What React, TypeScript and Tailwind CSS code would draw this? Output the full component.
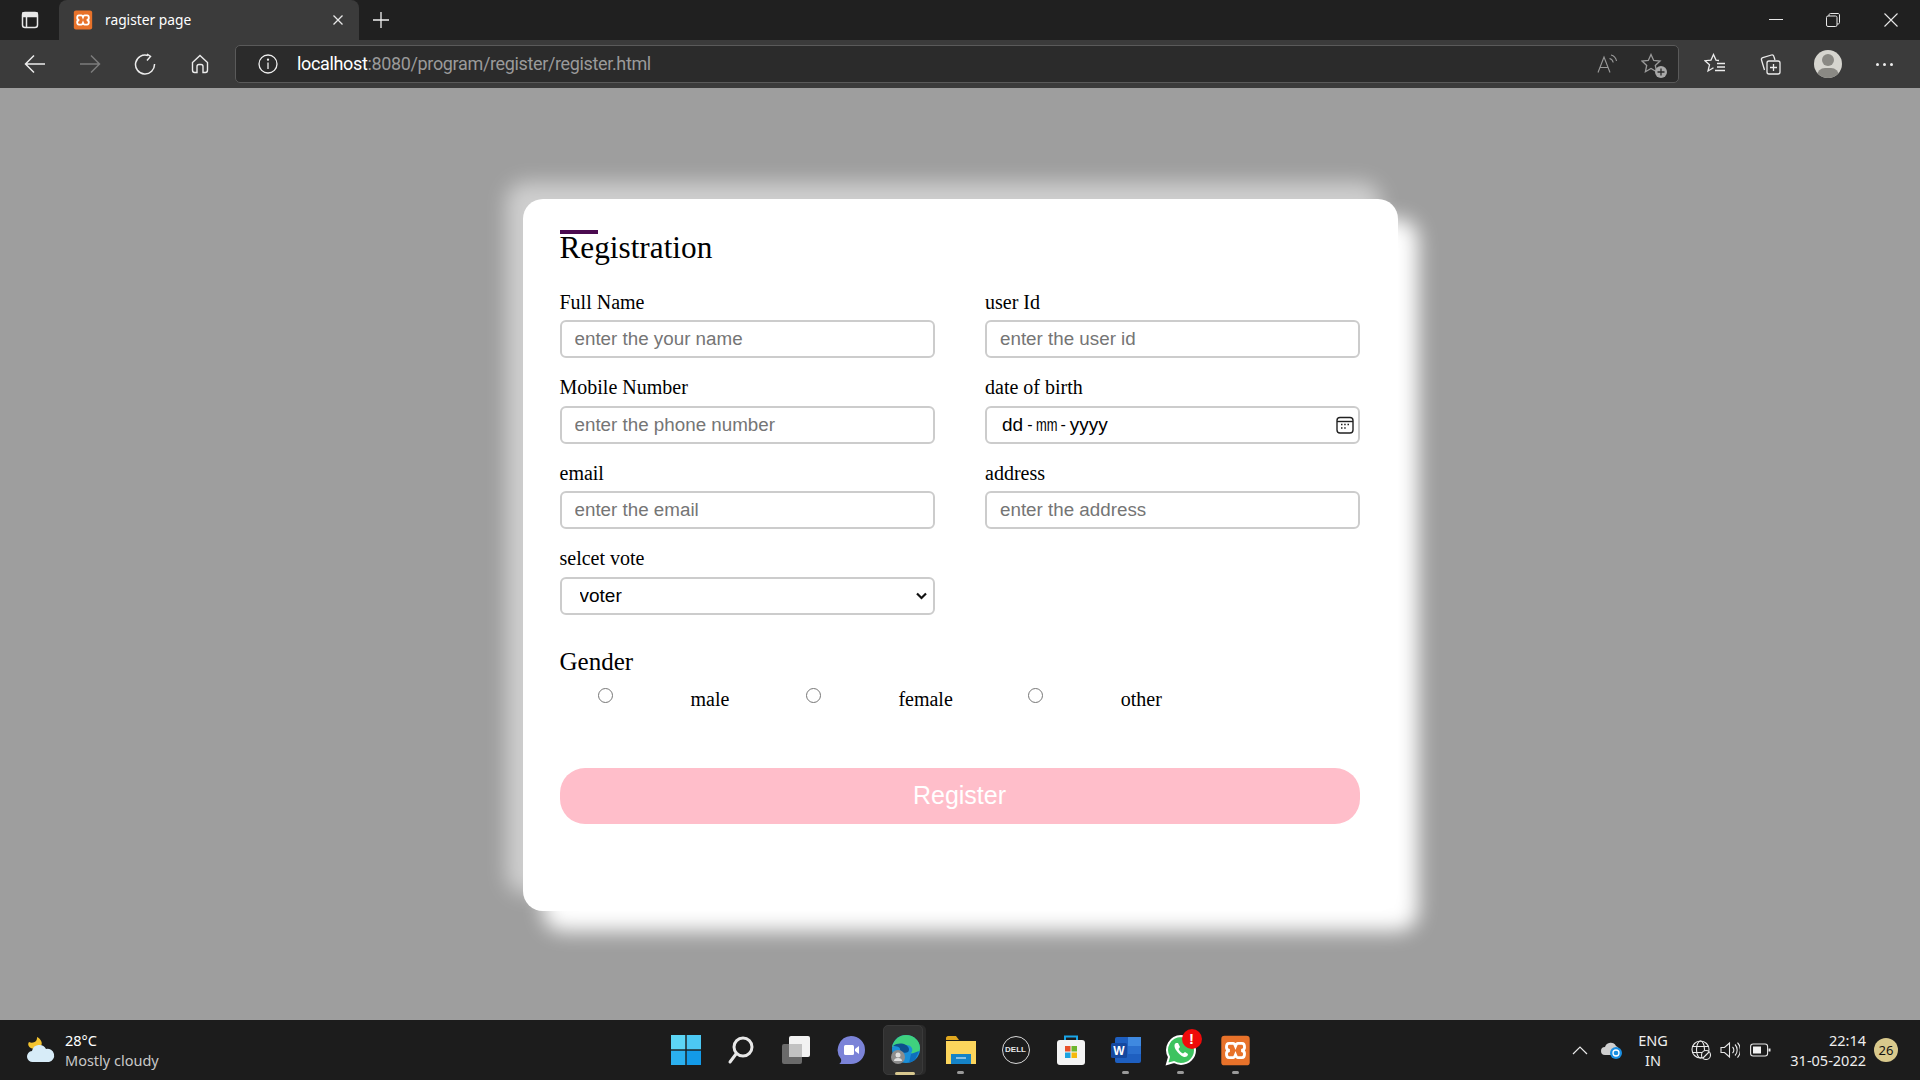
const sans = 'font-["Liberation_Sans",sans-serif]'

function Field({ label, children }: { label: string; children: React.ReactNode }) {
  return (
    <div className="mb-[18px]">
      <label className="block h-[23px] mb-[6.500px] text-[20px] leading-[23px] text-black">{label}</label>
      {children}
    </div>
  )
}

function TextInput({ placeholder }: { placeholder: string }) {
  return (
    <input
      placeholder={placeholder}
      className={`block w-[375px] h-[38px] px-[13px] border-2 border-[#cccccc] rounded-[6px] bg-white text-[18.800px] outline-none placeholder:text-[#757575] ${sans}`}
    />
  )
}

function XamppLogo({ size }: { size: number }) {
  return (
    <svg width={size} height={size} viewBox="0 0 24 24">
      <rect x="1" y="0.5" width="22" height="23" rx="2.5" fill="#e8722a" />
      <path d="M7 6.5h3.2c1 0 1.4 1.2 1.8 2.2.4-1 .8-2.2 1.8-2.2H17c1.5 0 2 1.5 2 3 0 1.4-1 2.3-2.5 2.5 1.500.2 2.500 1.100 2.500 2.500 0 1.500-.5 3-2 3h-3.200c-1 0-1.400-1.200-1.800-2.200-.4 1-.8 2.200-1.800 2.200H7c-1.500 0-2-1.500-2-3 0-1.400 1-2.300 2.500-2.500C6 11.800 5 10.900 5 9.500c0-1.500.5-3 2-3z" fill="none" stroke="#fff" strokeWidth="2.200" />
    </svg>
  )
}

function TitleBar() {
  return (
    <div className="h-[40px] bg-[#202020] flex items-end text-white shrink-0">
      <div className="w-[59px] h-[40px] flex items-center justify-center">
        <svg width="18" height="18" viewBox="0 0 18 18" fill="none" stroke="#e8e8e8" strokeWidth="1.500">
          <rect x="1.500" y="1.500" width="15" height="15" rx="2.500" />
          <path d="M5.500 5.500v11" />
          <path d="M2 2h14v3.500H2z" fill="#e8e8e8" />
        </svg>
      </div>
      <div className="w-[300px] h-[40px] bg-[#3b3b3b] rounded-t-[8px] flex items-center pl-[14px] pr-[14px]">
        <XamppLogo size={20} />
        <span className={`ml-[12px] text-[14.500px] text-white font-["Noto_Sans",sans-serif] scale-x-[0.95] origin-left`}>ragister page</span>
        <svg className="ml-auto" width="14" height="14" viewBox="0 0 14 14" stroke="#e8e8e8" strokeWidth="1.300"><path d="M2.500 2.500l9 9M11.500 2.500l-9 9" /></svg>
      </div>
      <div className="w-[43px] h-[40px] flex items-center justify-center">
        <svg width="18" height="18" viewBox="0 0 18 18" stroke="#f0f0f0" strokeWidth="1.300"><path d="M9 1v16M1 9h16" /></svg>
      </div>
      <div className="ml-auto flex h-[40px] items-center">
        <div className="w-[57px] flex justify-center">
          <svg width="14" height="14" viewBox="0 0 14 14" stroke="#e8e8e8" strokeWidth="1"><path d="M0 6.500h14" /></svg>
        </div>
        <div className="w-[57px] flex justify-center">
          <svg width="14" height="14" viewBox="0 0 14 14" fill="none" stroke="#e8e8e8" strokeWidth="1"><rect x="0.500" y="3" width="10.500" height="10.500" rx="1.500" /><path d="M3 3V2c0-.9.600-1.500 1.500-1.500H12c.9 0 1.500.6 1.500 1.500v7.500c0 .9-.6 1.500-1.500 1.500h-1" /></svg>
        </div>
        <div className="w-[59px] flex justify-center">
          <svg width="14" height="14" viewBox="0 0 14 14" stroke="#e8e8e8" strokeWidth="1.100"><path d="M0.500 0.500l13 13M13.500 0.500l-13 13" /></svg>
        </div>
      </div>
    </div>
  )
}

function Toolbar() {
  return (
    <div className="h-[48px] bg-[#3b3b3b] flex items-center shrink-0">
      <div className="w-[235px] flex items-center pl-[24px] gap-[33px]">
        <svg width="22" height="22" viewBox="0 0 22 22" fill="none" stroke="#ececec" strokeWidth="1.500"><path d="M21 11H2M10 2.500L1.500 11l8.500 8.500" /></svg>
        <svg width="22" height="22" viewBox="0 0 22 22" fill="none" stroke="#7c7c7c" strokeWidth="1.500"><path d="M1 11h19M12 2.500l8.500 8.500-8.500 8.500" /></svg>
        <svg width="22" height="22" viewBox="0 0 22 22" fill="none" stroke="#ececec" strokeWidth="1.500"><path d="M14 2.500A9.500 9.500 0 1 0 20.500 11" /><path d="M13 1l3.500 2.500L13 7.500" /></svg>
        <svg width="22" height="22" viewBox="0 0 22 22" fill="none" stroke="#ececec" strokeWidth="1.400"><path d="M11 2.500l7.500 7V17c0 1.300-.8 2.500-2 2.500h-2.500v-6c0-1.100-.9-2-2-2h-2c-1.100 0-2 .9-2 2v6H5.500c-1.200 0-2-1.200-2-2.500V9.500z" /></svg>
      </div>
      <div className="w-[1444px] h-[38px] bg-[#2b2b2b] border border-[#5a5a5a] rounded-[5px] flex items-center pl-[22px] pr-[15px]">
        <svg width="20" height="20" viewBox="0 0 20 20" fill="none" stroke="#eeeeee" strokeWidth="1.300"><circle cx="10" cy="10" r="9" /><path d="M10 8.500V15" /><circle cx="10" cy="5.700" r="0.500" fill="#eeeeee" /></svg>
        <span className='ml-[19px] mb-[2px] text-[18px] tracking-[-0.35px] font-["Roboto",sans-serif] text-white'>localhost<span className="text-[#9a9a9a]">:8080/program/register/register.html</span></span>
        <div className="ml-auto flex items-center gap-[24px]">
          <svg width="20" height="20" viewBox="0 0 20 20" fill="none" stroke="#9a9a9a" strokeWidth="1.100"><path d="M1 18.500L7 3l6 15.500M3.200 13.500h7.600" /><path d="M12.500 4.500c2 .5 3.300 2 3.700 4M14 1c3 .7 5 3 5.500 6" /></svg>
          <div className="relative w-[22px] h-[22px]">
            <svg width="22" height="22" viewBox="0 0 22 22" fill="none" stroke="#9a9a9a" strokeWidth="1.300"><path d="M10 1.500l2.700 6 6.300.6-4.700 4.300 1.300 6.300-5.600-3.300-5.600 3.300 1.300-6.300L1 8.100l6.300-.6z" /></svg>
            <span className="absolute -right-[4px] -bottom-[3px] w-[12px] h-[12px] rounded-full bg-[#a8a8a8] flex items-center justify-center">
              <svg width="8" height="8" viewBox="0 0 8 8" stroke="#2b2b2b" strokeWidth="1.300"><path d="M4 .5v7M.5 4h7" /></svg>
            </span>
          </div>
        </div>
      </div>
      <div className="flex-1 flex items-center pl-[25px]">
        <svg width="22" height="22" viewBox="0 0 22 22" fill="none" stroke="#ececec" strokeWidth="1.300"><path d="M15 7.500l-3-.4L9.500 1.500 7 7.100l-6 .6 4.500 4.100L4 18l5.500-3.200" /><path d="M13 10.500h8M13 14h8M11 17.500h10" /></svg>
        <svg className="ml-[34px]" width="22" height="22" viewBox="0 0 22 22" fill="none" stroke="#ececec" strokeWidth="1.300"><rect x="7" y="8" width="13" height="13" rx="2" /><path d="M13.500 11v7M10 14.500h7" /><path d="M4.500 17L1.500 7c-.3-1 .3-2 1.300-2.300L11.500 2c1-.3 2 .3 2.300 1.300L15 7" /></svg>
        <div className="ml-[32px] w-[28px] h-[28px] rounded-full bg-[#d6d5cf] relative overflow-hidden">
          <span className="absolute left-[8px] top-[4px] w-[12px] h-[12px] rounded-full bg-[#8a8984]" />
          <span className="absolute left-[3px] top-[18px] w-[22px] h-[16px] rounded-full bg-[#8a8984]" />
        </div>
        <div className="ml-[34px] flex gap-[4px]">
          <span className="w-[3px] h-[3px] rounded-full bg-[#ececec]" />
          <span className="w-[3px] h-[3px] rounded-full bg-[#ececec]" />
          <span className="w-[3px] h-[3px] rounded-full bg-[#ececec]" />
        </div>
      </div>
    </div>
  )
}

function RegisterCard() {
  return (
    <div className='w-[875px] h-[712px] bg-white rounded-[20px] pt-[31px] px-[37px] font-["Liberation_Serif",serif] text-black shadow-[20px_20px_20px_#ffffff,-17px_-17px_20px_rgba(255,255,255,0.5)]'>
      <h1 className="relative h-[36px] text-[31.250px] leading-[36px] mb-[24.750px] font-normal">
        <span className="absolute left-0 top-0 w-[38px] h-[4px] bg-[#4b0a50]" />
        Registration
      </h1>
      <div className="grid grid-cols-2 gap-x-[50px]">
        <Field label="Full Name"><TextInput placeholder="enter the your name" /></Field>
        <Field label="user Id"><TextInput placeholder="enter the user id" /></Field>
        <Field label="Mobile Number"><TextInput placeholder="enter the phone number" /></Field>
        <Field label="date of birth">
          <div className={`flex items-center w-[375px] h-[38px] pl-[15px] pr-[4px] border-2 border-[#cccccc] rounded-[6px] text-[19px] text-black ${sans}`}>
            <span>dd</span>
            <span className="mx-[4px] text-[16px]">-</span>
            <span className="inline-block w-[20px] scale-x-[0.68] origin-left">mm</span>
            <span className="mx-[4px] text-[16px]">-</span>
            <span>yyyy</span>
            <svg className="ml-auto" width="18" height="18" viewBox="0 0 18 18" fill="none" stroke="#222222" strokeWidth="1.400">
              <rect x="1" y="1.500" width="16" height="15.500" rx="3" />
              <path d="M1 5.500h16" />
              <path d="M5 8.500h1.500M8.200 8.500h1.500M11.500 8.500H13M5 12h1.500M8.200 12h1.500" strokeWidth="1.700" />
            </svg>
          </div>
        </Field>
        <Field label="email"><TextInput placeholder="enter the email" /></Field>
        <Field label="address"><TextInput placeholder="enter the address" /></Field>
        <Field label="selcet vote">
          <div className="relative w-[375px]">
            <select className={`block w-full h-[38px] pl-[18px] border-2 border-[#cccccc] rounded-[6px] bg-white text-[19px] text-black appearance-none ${sans}`}>
              <option>voter</option>
            </select>
            <svg className="absolute right-[8px] top-[15px] pointer-events-none" width="11" height="8" viewBox="0 0 11 8" fill="none" stroke="#111111" strokeWidth="2.200"><path d="M1 1.500l4.500 4.500L10 1.500" /></svg>
          </div>
        </Field>
      </div>
      <div className="text-[25px] leading-[29px] mt-[14px] mb-[12px]">Gender</div>
      <div className="flex items-start gap-[77px] pl-[38px] h-[23px] text-[20px] leading-[23px]">
        <input type="radio" name="gender" className="w-[15px] h-[15px] m-0 shrink-0" />
        <span className="ml-[1px]">male</span>
        <input type="radio" name="gender" className="w-[15px] h-[15px] m-0 shrink-0" />
        <span className="mr-[-2px]">female</span>
        <input type="radio" name="gender" className="w-[15px] h-[15px] m-0 shrink-0" />
        <span className="ml-[1px]">other</span>
      </div>
      <button className={`mt-[57px] w-[800px] h-[56px] rounded-[25px] bg-[#ffbeca] text-white text-[25px] ${sans}`}>Register</button>
    </div>
  )
}

function TaskbarIcon({ children, dot, active }: { children: React.ReactNode; dot?: boolean; active?: boolean }) {
  return (
    <div className="relative w-[55px] h-[50px] flex items-center justify-center">
      {active && <span className="absolute left-[11px] top-0 w-[37px] h-[50px] rounded-[5px] bg-[#2a2a2a]" />}
      {active && <span className="absolute left-[5px] top-0 w-[40px] h-[50px] rounded-[5px] bg-[#303030] border border-[#3a3a3a]" />}
      <span className="relative flex">{children}</span>
      {dot && <span className="absolute bottom-[1px] left-[24px] w-[7px] h-[3px] rounded-full bg-[#9a9a9a]" />}
      {active && <span className="absolute bottom-[0px] left-[17px] w-[20px] h-[3px] rounded-full bg-[#d8c88f]" />}
    </div>
  )
}

function Taskbar() {
  return (
    <div className="h-[60px] bg-[#1c1c1c] flex items-center shrink-0 relative text-white font-['Noto_Sans',sans-serif]">
      <div className="w-[658px] flex items-center pl-[26px]">
        <svg width="30" height="28" viewBox="0 0 30 28">
          <path d="M8 13C3 12 1 9 3 6c2 1 5 1 7-1 1-1 1-3 1-4 4 2 6 6 4 9z" fill="#f4c430" />
          <path d="M7 26a5.500 5.500 0 0 1-1-11 7.500 7.500 0 0 1 14-2 6.500 6.500 0 0 1 3 13z" fill="#d7ecf8" />
        </svg>
        <div className="ml-[9px] leading-[20px] text-[14.500px]">
          <div className="text-white">28°C</div>
          <div className="text-[#c8c8c8]">Mostly cloudy</div>
        </div>
      </div>
      <div className="flex items-center">
        <TaskbarIcon>
          <svg width="30" height="30" viewBox="0 0 30 30">
            <path d="M0 0h14.300v14.300H0z" fill="#5dd6f5" /><path d="M15.700 0H30v14.300H15.700z" fill="#4cc8f3" /><path d="M0 15.700h14.300V30H0z" fill="#2bb0ef" /><path d="M15.700 15.700H30V30H15.700z" fill="#139ae8" />
          </svg>
        </TaskbarIcon>
        <TaskbarIcon>
          <svg width="30" height="30" viewBox="0 0 30 30" fill="none" stroke="#e8e8e8" strokeLinecap="round"><circle cx="17" cy="12" r="9" strokeWidth="3" /><path d="M10 19l-6 8" strokeWidth="3" /></svg>
        </TaskbarIcon>
        <TaskbarIcon>
          <svg width="30" height="30" viewBox="0 0 30 30"><rect x="1" y="9" width="20" height="20" rx="2" fill="#6a6a6a" /><rect x="8" y="1" width="21" height="21" rx="2" fill="#f2f2f2" /><rect x="8" y="9" width="13" height="13" fill="#c2c2c2" /></svg>
        </TaskbarIcon>
        <TaskbarIcon>
          <svg width="30" height="30" viewBox="0 0 30 30"><path d="M15 1a14 14 0 0 1 0 28H3c2-1 2.500-3 2-5A14 14 0 0 1 15 1z" fill="#7b83d8" /><rect x="8" y="10" width="10" height="10" rx="1.500" fill="#fff" /><path d="M19 14l4-3v8l-4-3z" fill="#fff" /></svg>
        </TaskbarIcon>
        <TaskbarIcon active>
          <svg width="30" height="32" viewBox="0 0 30 32">
            <circle cx="15" cy="15" r="14" fill="#1a8fd8" />
            <path d="M1 13C3 5 9 1 15 1c8 0 14 6 14 13 0 5-5 7-9 5 3-3 1-8-5-8-6 0-11 0-14 2z" fill="#3fd17e" />
            <path d="M2 12C6 9 11 9 15 11c3 2 4 5 2 7-3 2-8 0-8-3 0-2-3-3-7-3z" fill="#0d4f8c" />
            <path d="M20 20l8-3-4 9-6 3z" fill="#0e6fbd" />
            <circle cx="7" cy="23" r="7" fill="#8d8d8d" /><circle cx="7" cy="21" r="2.500" fill="#e0e0e0" /><path d="M3 27a4 3 0 0 1 8 0z" fill="#e0e0e0" />
          </svg>
        </TaskbarIcon>
        <TaskbarIcon dot>
          <svg width="30" height="28" viewBox="0 0 30 28"><path d="M0 2c0-1 1-2 2-2h8l3 4h-13z" fill="#e0a71f" /><path d="M0 5h30v23H0z" fill="#fcd55c" /><path d="M5 18h20v10H5z" fill="#1583c7" /><path d="M10 22h10" stroke="#fff" strokeWidth="1" /></svg>
        </TaskbarIcon>
        <TaskbarIcon>
          <div className='w-[28px] h-[28px] rounded-full border-[1.500px] border-[#d8d8d8] flex items-center justify-center text-[8px] font-bold text-[#e8e8e8] font-["Liberation_Sans",sans-serif]'>DELL</div>
        </TaskbarIcon>
        <TaskbarIcon>
          <svg width="30" height="30" viewBox="0 0 30 30"><path d="M9 6V1.500h12V6" fill="none" stroke="#19a5e8" strokeWidth="2" /><rect x="1" y="5" width="28" height="25" rx="3" fill="#f4f4f4" /><rect x="9" y="11" width="5.500" height="5.500" fill="#e8512a" /><rect x="15.500" y="11" width="5.500" height="5.500" fill="#6cb52d" /><rect x="9" y="17.500" width="5.500" height="5.500" fill="#1da3e0" /><rect x="15.500" y="17.500" width="5.500" height="5.500" fill="#f5b90f" /></svg>
        </TaskbarIcon>
        <TaskbarIcon dot>
          <svg width="30" height="28" viewBox="0 0 30 28"><rect x="4" y="1" width="26" height="26" rx="2" fill="#1e5fc0" /><rect x="17" y="1" width="13" height="9" fill="#3f89e0" /><rect x="17" y="10" width="13" height="8" fill="#2a6fce" /><rect x="0" y="7" width="16" height="15" rx="1.500" fill="#15489f" /><text x="8" y="19" textAnchor="middle" fontSize="12" fontWeight="700" fill="#fff" fontFamily="Liberation Sans">W</text></svg>
        </TaskbarIcon>
        <TaskbarIcon dot>
          <svg width="32" height="32" viewBox="0 0 32 32"><path d="M16 2a14 14 0 0 1 0 28 14 14 0 0 1-7-2l-7 2 2-7A14 14 0 0 1 16 2z" fill="#3dc35f" stroke="#fff" strokeWidth="2" /><path d="M11 9c-2 1-2 4 0 7s5 6 8 7c2 .5 4-1 4-3l-3-2-2 1.500c-2-1-3.500-2.500-4.500-4.500l1.500-2-2-4z" fill="#fff" /></svg>
          <span className='absolute -top-[5px] left-[17px] w-[20px] h-[20px] rounded-full bg-[#ef0a0a] text-white text-[15px] leading-[20px] text-center font-bold font-["Liberation_Sans",sans-serif]'>!</span>
        </TaskbarIcon>
        <TaskbarIcon dot>
          <XamppLogo size={31} />
        </TaskbarIcon>
      </div>
      <div className="ml-auto flex items-center h-full pr-[22px]">
        <svg width="16" height="10" viewBox="0 0 16 10" fill="none" stroke="#e8e8e8" strokeWidth="1.200"><path d="M1 9l7-7 7 7" /></svg>
        <div className="relative ml-[13px] w-[22px] h-[18px]">
          <svg width="22" height="18" viewBox="0 0 22 18"><path d="M4 14a4 4 0 0 1 0-8 6 6 0 0 1 11-1 4 4 0 0 1 2 6v3z" fill="#cfcfcf" /><circle cx="15" cy="12" r="6" fill="#1a8fe3" /><circle cx="15" cy="12" r="3" fill="none" stroke="#fff" strokeWidth="1.300" /></svg>
        </div>
        <div className="ml-[11px] w-[38px] text-center text-[14.500px] leading-[20px] text-[#eeeeee]">
          <div>ENG</div>
          <div>IN</div>
        </div>
        <svg className="ml-[19px]" width="20" height="20" viewBox="0 0 20 20" fill="none" stroke="#e8e8e8" strokeWidth="1.100"><circle cx="9.500" cy="9.500" r="8.500" /><ellipse cx="9.500" cy="9.500" rx="4" ry="8.500" /><path d="M1 6.500h17M1 12.500h10" /><circle cx="15" cy="15" r="4.500" fill="#1c1c1c" /><path d="M12 18l6-6" /></svg>
        <svg className="ml-[9px]" width="20" height="18" viewBox="0 0 20 18" fill="none" stroke="#e8e8e8" strokeWidth="1.100"><path d="M1 6.500v5h3.500L9.500 16V2L4.500 6.500z" /><path d="M12.500 6a4 4 0 0 1 0 6M15 3.500a8 8 0 0 1 0 11M17.500 1.500a11 11 0 0 1 0 15" /></svg>
        <svg className="ml-[10px]" width="21" height="14" viewBox="0 0 21 14" fill="none" stroke="#e8e8e8" strokeWidth="1.100"><rect x="0.600" y="1" width="17" height="12" rx="2.500" /><rect x="3" y="3.500" width="8" height="7" fill="#f2f2f2" stroke="none" /><path d="M19.500 5.500v3" strokeWidth="2" /></svg>
        <div className="ml-[10px] w-[85px] text-right text-[14.500px] leading-[20px] text-[#eeeeee]">
          <div>22:14</div>
          <div>31-05-2022</div>
        </div>
        <div className="ml-[8px] w-[24px] h-[24px] rounded-full bg-[#d9c98c] text-[#111111] text-[13px] leading-[24px] text-center">26</div>
      </div>
    </div>
  )
}

export default function App() {
  return (
    <div className="w-[1920px] h-[1080px] flex flex-col overflow-hidden">
      <TitleBar />
      <Toolbar />
      <main className="flex-1 bg-[#9e9e9e] flex items-center justify-center pt-[2px]">
        <RegisterCard />
      </main>
      <Taskbar />
    </div>
  )
}
